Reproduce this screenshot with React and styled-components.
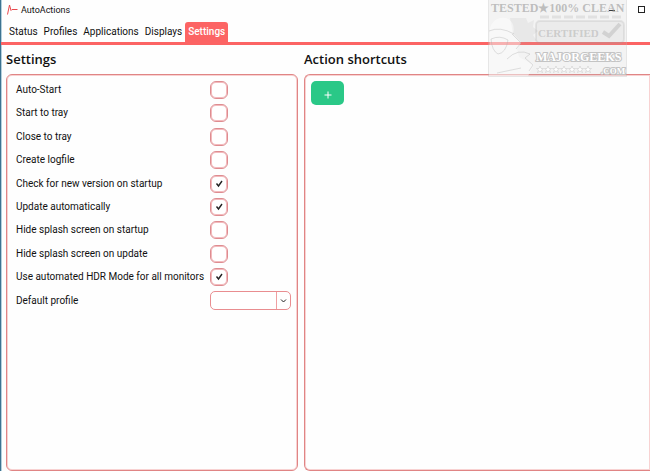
import React, { useState } from 'react';
import styled, { createGlobalStyle } from 'styled-components';

const GlobalStyle = createGlobalStyle`
  * {
    box-sizing: border-box;
  }
  body {
    margin: 0;
    background: #fefefe;
    color: #111;
    font-family: Roboto, "Open Sans", sans-serif;
    font-size: 10px;
    line-height: 18px;
  }
`;

const Window = styled.div`
  position: relative;
  display: flex;
  flex-direction: column;
  min-height: 100vh;
  border-left: 1px solid #3d7391;
  box-shadow: inset 1px 0 0 #b4d0dd;
  overflow: hidden;
`;

const TitleBar = styled.header`
  display: flex;
  align-items: center;
  height: 20px;
  padding: 0 4px 0 6px;
`;

const Title = styled.span`
  flex: 1;
  margin-left: 3px;
  font-size: 9px;
`;

const WindowButton = styled.button`
  display: flex;
  justify-content: center;
  align-items: center;
  width: 30px;
  height: 20px;
  padding: 0;
  border: none;
  background: transparent;
  &:last-child {
    width: 8px;
    margin-left: 11px;
  }
`;

const Tabs = styled.nav`
  display: flex;
  height: 25px;
  padding: 2px 0 0 5px;
  border-bottom: 3px solid #fc6464;
`;

const Tab = styled.button`
  height: 20px;
  padding: 0 3px;
  border: none;
  border-radius: 3px 3px 0 0;
  background: ${({ $active }) => ($active ? '#fc6464' : 'transparent')};
  color: ${({ $active }) => ($active ? '#fff' : '#111')};
  font-family: inherit;
  font-size: 10px;
  font-weight: ${({ $active }) => ($active ? 500 : 400)};
  line-height: 20px;
`;

const Content = styled.main`
  flex: 1;
  display: grid;
  grid-template-columns: 292px 1fr;
  gap: 6px;
  padding: 4px 0 0 5px;
`;

const Section = styled.section`
  display: flex;
  flex-direction: column;
`;

const Heading = styled.h2`
  margin: 0 0 5px;
  font-family: "Open Sans", sans-serif;
  font-size: 13px;
  font-weight: 600;
  line-height: 20px;
`;

const Panel = styled.div`
  flex: 1;
  padding: 6px;
  border: 1px solid #e08585;
  border-right-width: ${({ $open }) => ($open ? 0 : '1px')};
  border-radius: ${({ $open }) => ($open ? '6px 0 0 6px' : '6px')};
  box-shadow: inset 0 0 0 1px #f8d2d2;
`;

const Options = styled.div`
  display: flex;
  flex-direction: column;
  justify-content: space-between;
  height: 205px;
  margin-bottom: 5px;
`;

const Row = styled.div`
  display: grid;
  grid-template-columns: 194px 1fr;
  align-items: center;
  padding-left: 3px;
`;

const Label = styled.label`
  white-space: nowrap;
`;

const CheckWrap = styled.span`
  position: relative;
  width: 18px;
  height: 18px;
  svg {
    position: absolute;
    top: 5px;
    left: 5px;
    pointer-events: none;
  }
`;

const Checkbox = styled.input`
  appearance: none;
  display: block;
  width: 18px;
  height: 18px;
  margin: 0;
  border: 1px solid #de8c90;
  border-radius: 6px;
  box-shadow: inset 0 0 0 1px #f3babd;
  background: #fff;
`;

const SelectWrap = styled.div`
  position: relative;
  width: 81px;
  svg {
    position: absolute;
    top: 7px;
    right: 4px;
    pointer-events: none;
  }
`;

const Select = styled.select`
  appearance: none;
  display: block;
  width: 100%;
  height: 19px;
  border: 1px solid #e98d90;
  border-radius: 5px;
  background: linear-gradient(#f0a0a2, #f0a0a2) right 13px top / 1px 100% no-repeat #fff;
`;

const AddButton = styled.button`
  width: 33px;
  height: 24px;
  padding: 0;
  border: none;
  border-radius: 5px;
  background: #2ac887;
  svg {
    display: block;
    margin: 3px auto 0;
  }
`;

const Stamp = styled.svg`
  position: absolute;
  top: 0;
  right: 23px;
  pointer-events: none;
`;

const options = [
  ['Auto-Start', false],
  ['Start to tray', false],
  ['Close to tray', false],
  ['Create logfile', false],
  ['Check for new version on startup', true],
  ['Update automatically', true],
  ['Hide splash screen on startup', false],
  ['Hide splash screen on update', false],
  ['Use automated HDR Mode for all monitors', true],
];

const tabs = ['Status', 'Profiles', 'Applications', 'Displays', 'Settings'];

const stars = [52, 60, 68, 76, 84, 92, 100];

const Option = ({ id, label, initial }) => {
  const [checked, setChecked] = useState(initial);

  return (
    <Row>
      <Label htmlFor={id}>{label}</Label>
      <CheckWrap>
        <Checkbox
          id={id}
          type="checkbox"
          checked={checked}
          onChange={(e) => setChecked(e.target.checked)}
        />
        {checked && (
          <svg width="8" height="8" viewBox="0 0 8 8">
            <path d="M1.5 3.5 L3.5 6 L7 1" fill="none" stroke="#222" strokeWidth="1.4" />
          </svg>
        )}
      </CheckWrap>
    </Row>
  );
};

const Watermark = () => (
  <Stamp width="139" height="77" viewBox="0 0 139 77" aria-hidden="true">
    <rect x="0.5" y="-1" width="138" height="77.5" fill="#bbb" fillOpacity="0.16" stroke="#bbb" strokeOpacity="0.3" />
    <path d="M22 18 L38 18 L40 23 L46 20 L45 27 L50 31 L45 35 L49 41 L34 43 L25 34 Z" fill="#aaa" fillOpacity="0.14" />
    <path d="M2 28 Q6 16 18 18 Q28 22 25 34 L33 43 L29 49 L31 57 L46 65 L40 76 H1 V55 Z" fill="#fff" fillOpacity="0.45" />
    <path d="M1 31 Q12 26 26 34 M3 39 Q12 35 20 40 Q18 53 10 54 Q4 51 3 39 M24 34 L33 43 L28 49 M19 59 Q30 48 42 54 L37 58 L45 65 L41 71 M9 73 L33 68" fill="none" stroke="#aaa" strokeOpacity="0.35" />
    <path d="M52 17 H136" stroke="#999" strokeOpacity="0.2" strokeWidth="3" strokeDasharray="9 3" />
    <rect x="48" y="21" width="88" height="22" rx="4" fill="#aaa" fillOpacity="0.1" stroke="#999" strokeOpacity="0.18" strokeWidth="2" />
    <path d="M115 32 L121 36 L132 24" fill="none" stroke="#999" strokeOpacity="0.3" strokeWidth="4" />
    <g fontFamily="Liberation Serif, serif" fontWeight="700">
      <text x="3" y="12" fontSize="12" fill="#999" fillOpacity="0.6">TESTED★100% CLEAN</text>
      <text x="50" y="37" fontSize="11" fill="#999" fillOpacity="0.4">CERTIFIED</text>
      <g fill="#fff" stroke="#c4c4c4" strokeWidth="2" paintOrder="stroke">
        <text x="48" y="61" fontSize="12">MAJORGEEKS</text>
        <text x="113" y="74" fontSize="9">.COM</text>
      </g>
    </g>
    {stars.map((x) => (
      <path
        key={x}
        d={`M${x} 66 l1 2.5 h2.5 l-2 1.5 l1 2.5 l-2.5 -1.5 l-2.5 1.5 l1 -2.5 l-2 -1.5 h2.5 Z`}
        fill="#fff"
        stroke="#ccc"
        strokeWidth="0.6"
      />
    ))}
  </Stamp>
);

export default function App() {
  const [active, setActive] = useState('Settings');

  return (
    <>
      <GlobalStyle />
      <Window>
        <TitleBar>
          <svg width="11" height="12" viewBox="0 0 11 12">
            <path d="M0.5 10.5 L2.5 1 L4 6.5 L5 5.5 H10.5" fill="none" stroke="#e8484c" />
          </svg>
          <Title>AutoActions</Title>
          <WindowButton aria-label="Minimize">
            <svg width="8" height="8">
              <path d="M1 4.5 H7" stroke="#222" />
            </svg>
          </WindowButton>
          <WindowButton aria-label="Maximize">
            <svg width="8" height="8">
              <rect x="0.5" y="0.5" width="6" height="6" fill="none" stroke="#222" />
            </svg>
          </WindowButton>
        </TitleBar>
        <Tabs>
          {tabs.map((tab) => (
            <Tab key={tab} $active={tab === active} onClick={() => setActive(tab)}>
              {tab}
            </Tab>
          ))}
        </Tabs>
        <Content>
          <Section>
            <Heading>Settings</Heading>
            <Panel>
              <Options>
                {options.map(([label, initial], i) => (
                  <Option key={label} id={`option-${i}`} label={label} initial={initial} />
                ))}
              </Options>
              <Row>
                <Label htmlFor="profile">Default profile</Label>
                <SelectWrap>
                  <Select id="profile" />
                  <svg width="7" height="6" viewBox="0 0 7 6">
                    <path d="M1 1.5 L3.5 4 L6 1.5" fill="none" stroke="#222" />
                  </svg>
                </SelectWrap>
              </Row>
            </Panel>
          </Section>
          <Section>
            <Heading>Action shortcuts</Heading>
            <Panel $open>
              <AddButton aria-label="Add shortcut">
                <svg width="8" height="8">
                  <path d="M4 0.5 V7.5 M0.5 4 H7.5" stroke="#fff" />
                </svg>
              </AddButton>
            </Panel>
          </Section>
        </Content>
        <Watermark />
      </Window>
    </>
  );
}
